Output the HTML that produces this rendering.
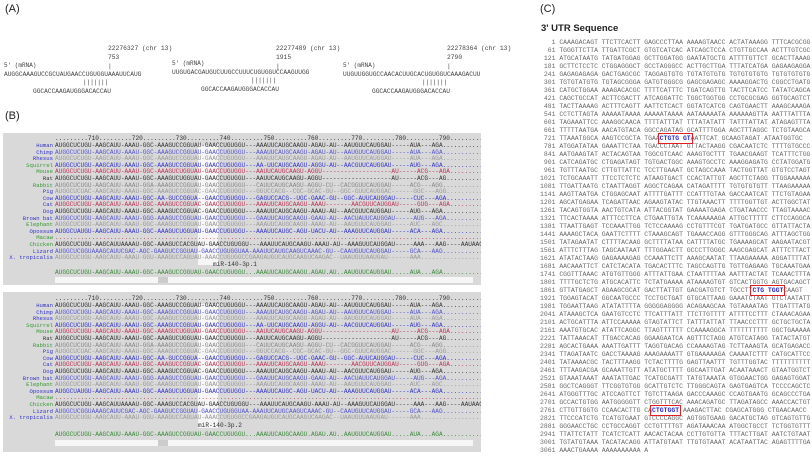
<!DOCTYPE html>
<html><head><meta charset="utf-8"><style>
body{margin:0;width:812px;height:457px;background:#fff;position:relative;overflow:hidden;font-family:"Liberation Sans",sans-serif}
.a{position:absolute;white-space:pre;font-family:"Liberation Mono",monospace;color:#444}
.lbl{position:absolute;font-size:11px;color:#222}
.box{position:absolute;left:3px;width:478px;background:#d9d9d9;overflow:hidden}
.sp{position:absolute;left:0;width:50px;text-align:right;font-family:"Liberation Mono",monospace;font-size:5.6px;line-height:6.6px;white-space:pre}
.sq{position:absolute;left:52px;font-family:"Liberation Mono",monospace;font-size:6.1px;line-height:6.6px;white-space:pre;letter-spacing:0}
.hl{position:absolute;left:195px;width:20px;background:rgba(255,255,255,.75)}
.sb{position:absolute;left:52px;width:418px;height:6px;background:#f6f6f6}
.c{position:absolute;left:540px;top:39px;font-family:"Liberation Mono",monospace;font-size:6.45px;line-height:8px;white-space:pre;color:#6a6a6a}
.bl{color:#2a2ad0;font-weight:bold;outline:1.3px solid #e02020;outline-offset:1px}
.s{font-size:6.2px}
</style></head><body>
<div class="lbl" style="left:5px;top:3px">(A)</div>
<div class="lbl" style="left:5px;top:110px">(B)</div>
<div class="lbl" style="left:540px;top:3px">(C)</div>

<!-- Panel A -->
<div class="a" style="left:108px;top:44px;font-size:6.3px;line-height:9px">22276327 (chr 13)
753
|</div>
<div class="a" style="left:4px;top:62px;font-size:6px">5' (mRNA)</div>
<div class="a s" style="left:4px;top:71px">AUGGCAAAGUCCGCUAUGAACCUGUGGUAAAUUCAUG</div>
<div class="a" style="left:83px;top:79px;font-size:6px">|||||||</div>
<div class="a s" style="left:33px;top:88px">GGCACCAAGAUGGGACACCAU</div>

<div class="a" style="left:276px;top:44px;font-size:6.3px;line-height:9px">22277489 (chr 13)
1915
|</div>
<div class="a" style="left:172px;top:60px;font-size:6px">5' (mRNA)</div>
<div class="a s" style="left:172px;top:69px">UUGUGACGAUGUCUUGCCUUUCUGUGGUCCAAGUUGG</div>
<div class="a" style="left:251px;top:77px;font-size:6px">|||||||</div>
<div class="a s" style="left:201px;top:86px">GGCACCAAGAUGGGACACCAU</div>

<div class="a" style="left:447px;top:44px;font-size:6.3px;line-height:9px">22278364 (chr 13)
2790
|</div>
<div class="a" style="left:343px;top:62px;font-size:6px">5' (mRNA)</div>
<div class="a s" style="left:343px;top:71px">UUGUUGGUGCCAACACUUGCACUGUGGUCAAAGACUU</div>
<div class="a" style="left:422px;top:79px;font-size:6px">|||||||</div>
<div class="a s" style="left:372px;top:88px">GGCACCAAGAUGGGACACCAU</div>

<!-- Panel B box 1 -->
<div class="box" style="top:133px;height:152px">
 <div class="hl" style="top:12px;height:120px"></div>
 <div class="sq" style="top:3px;color:#333">.........710.........720.........730.........740.........750.........760.........770.........780.........790.........</div>
 <div class="sp" style="top:10px"><span style="color:#33c">Human</span>
<span style="color:#33c">Chimp</span>
<span style="color:#33c">Rhesus</span>
<span style="color:#393">Squirrel</span>
<span style="color:#393">Mouse</span>
<span style="color:#333">Rat</span>
<span style="color:#393">Rabbit</span>
<span style="color:#33c">Pig</span>
<span style="color:#33c">Cow</span>
<span style="color:#33c">Cat</span>
<span style="color:#33c">Dog</span>
<span style="color:#33c">Brown bat</span>
<span style="color:#393">Elephant</span>
<span style="color:#33c">Opossum</span>
<span style="color:#393">Macaw</span>
<span style="color:#393">Chicken</span>
<span style="color:#33c">Lizard</span>
<span style="color:#33c">X. tropicalis</span></div>
 <div class="sq" style="top:10px"><span style="color:#333">AUGGCUCUGU-AAGCAUU-AAAU-GGC-AAAGUCCGGUAU-GAACCUGUGGU---AAAUUCAUGCAAGU-AGAU-AU--AAUGUUCAUGGAU-----AUA---AGA..............</span>
<span style="color:#55c">AUGGCUCUGU-AAGCAUU-AAAU-GGC-AAAGUCCGGUAU-GAACCUGUGGU---AAAUUCAUGCAAGU-AGAU-AU--AAUGUUCAUGGAU-----AUA---AGA..............</span>
<span style="color:#999">AUGGCUCUGU-AAGCAUU-AAAU-GGC-AAAGUCCGGUAU-GAACCUGUGGU---AAAUUCAUGCAAGU-AGAU-AU--AAUGUUCAUGGAU-----AUA---AGA..............</span>
<span style="color:#33c">AUGGCUCUGU-AAGCAUU-AAAU-GGC-AAAGUCCGGUAU-GAACCUGUGGU---AA-UUCAUGCAAGU-AGGU-AU--AACGUUCAUGGAU-----AUG---AGA..............</span>
<span style="color:#b35">AUGGCUCUGU-AAGCAUU-AAAU-GGC-AAAGUCUGGUAU-GAACCUGUGGU---AAUUCAUGCAAGU-AGGU-------------------AU-----ACG---AGA..............</span>
<span style="color:#333">AUGGCUCUGU-AAGCAUU-AAAU-GGC-AAAGUCUGGUAU-GAACCUGUGGU---AAUUCAUGCAAGU-AGGU-------------------AU-----ACG---AG...............</span>
<span style="color:#888">AUGGCUCUGU-AAGCAUU-AAAU-GGA-AAAGUCCGGUAU-GAACCUGUGGU---CAUUCAUGCAAGU-AGGU-CU--CACGGUUCAUGGAU-----ACG---AGG..............</span>
<span style="color:#999">AUGGCUCUAC-AAGCAUU-AAAU-GGC-AAAGUCCGGUAC-GAACCUGUGGU---GGUCCACG--CGC-GCAC-GU--GGC-GUUCAUGGAC------GGC---AGG..............</span>
<span style="color:#33c">AUGGCUCUGU-AAGCAUU-AAAU-GGC-AA-GUCCGGUA--GAACCUGUGGU---GAGUCCACG--UGC-GAAC-GU--GGC-AUUCAUGGAU-----CUC---AGA..............</span>
<span style="color:#b35">AUGGCUCUGU-AAGCAUU-AAAU-GGC-AAAGUCCGGUAC-GAACCUGUGGU---AAAUUCAUGCAAGU-AAAU-------AACGUUCAUGGAU-----GUG---AGA..............</span>
<span style="color:#333">AUGGCUCUGU-AAGCAUU-AAAU-GGC-AAAGUCCGGUAC-GAACCUGUGGU---AAAUUCAUGCAAGU-AAAU-AU--AACGUUCAUGGAU-----AUG---AGA..............</span>
<span style="color:#55c">AUGGCUCUGU-AAGCAUU-AAAU-GGG-AAAGUCCGGUAU-GAACCUGUGGU---GAAUUCAUGCAAGU-GAAU-AU--AACUAUUCAUGGAU-----AUG---AGA..............</span>
<span style="color:#999">AUGGCUCUGU-AAGCAUU-AAAU-GGC-AAAGUCCGGUAU-GAACCUGUGGU---AAAUUCAUGCAAGU-AAAU-AU--AAUGUUCAUGGAU-----AUC---AGC..............</span>
<span style="color:#33c">AUGGCUAUGU-AAGCAUU-AAAU-GGC-AAAGUCUGGUAU-GAACCUGUGGU---AAAUUCAUGC-AGU-UACU-AU--AAAGUUCAUGGAU-----ACA---AGA..............</span>
<span style="color:#b35">.....................................................................................................................</span>
<span style="color:#333">AUGGCUCUGU-AAGCAUUAAAAU-GGC-AAAGUCCACGUAU-GAACCUGUGGU---AAAUUCAUGCAAGU-AAAU-AU--AAAGUUCAUGGAU-----AAA---AAG----AAUAACAAU</span>
<span style="color:#55c">AUGGCUCGGUAAAGCAUUCGAC-AGC-GAAGUCCGGUAU-GAACCUGUGGUAA-AAAUUCAUGCAAGUCAAAC-GU--CAAUGUUCAUGGAU-----GCA---AAG..............</span>
<span style="color:#999">AUGGCUCUGU-AAGCAUU-AAAU-GGU-AAAGUCCAGUAU-AAACCUGUGGCCGAAGAUGUCAUGCAAGUCAAGAC--UAAUGUUAAUGAU------AAA..................</span></div>
 <div class="sq" style="top:129px;color:#333;left:210px">miR-140-3p.1</div>
 <div class="sq" style="top:137px;color:#3a8a3a">AUGGCUCUGU-AAGCAUU-AAAU-GGC-AAAGUCCGGUAU-GAACCUGUGGU...AAAUUCAUGCAAGU.AGAU.AU..AAUGUUCAUGGAU.....AUA...AGA..............</div>
 <div class="sb" style="top:144px"></div>
 <div style="position:absolute;left:155px;top:144px;width:10px;height:6px;background:#ccc"></div>
</div>

<!-- Panel B box 2 -->
<div class="box" style="top:292px;height:160px">
 <div class="hl" style="top:12px;height:124px"></div>
 <div class="sq" style="top:4px;color:#333">.........710.........720.........730.........740.........750.........760.........770.........780.........790.........</div>
 <div class="sp" style="top:11px"><span style="color:#33c">Human</span>
<span style="color:#33c">Chimp</span>
<span style="color:#33c">Rhesus</span>
<span style="color:#393">Squirrel</span>
<span style="color:#393">Mouse</span>
<span style="color:#333">Rat</span>
<span style="color:#393">Rabbit</span>
<span style="color:#33c">Pig</span>
<span style="color:#33c">Cow</span>
<span style="color:#33c">Cat</span>
<span style="color:#33c">Dog</span>
<span style="color:#33c">Brown bat</span>
<span style="color:#393">Elephant</span>
<span style="color:#33c">Opossum</span>
<span style="color:#393">Macaw</span>
<span style="color:#393">Chicken</span>
<span style="color:#33c">Lizard</span>
<span style="color:#33c">X. tropicalis</span></div>
 <div class="sq" style="top:11px"><span style="color:#333">AUGGCUCUGU-AAGCAUU-AAAU-GGC-AAAGUCCGGUAU-GAACCUGUGGU---AAAUUCAUGCAAGU-AGAU-AU--AAUGUUCAUGGAU-----AUA---AGA..............</span>
<span style="color:#55c">AUGGCUCUGU-AAGCAUU-AAAU-GGC-AAAGUCCGGUAU-GAACCUGUGGU---AAAUUCAUGCAAGU-AGAU-AU--AAUGUUCAUGGAU-----AUA---AGA..............</span>
<span style="color:#999">AUGGCUCUGU-AAGCAUU-AAAU-GGC-AAAGUCCGGUAU-GAACCUGUGGU---AAAUUCAUGCAAGU-AGAU-AU--AAUGUUCAUGGAU-----AUA---AGA..............</span>
<span style="color:#33c">AUGGCUCUGU-AAGCAUU-AAAU-GGC-AAAGUCCGGUAU-GAACCUGUGGU---AA-UUCAUGCAAGU-AGGU-AU--AACGUUCAUGGAU-----AUG---AGA..............</span>
<span style="color:#b35">AUGGCUCUGU-AAGCAUU-AAAU-GGC-AAAGUCUGGUAU-GAACCUGUGGU---AAUUCAUGCAAGU-AGGU-------------------AU-----ACG---AGA..............</span>
<span style="color:#333">AUGGCUCUGU-AAGCAUU-AAAU-GGC-AAAGUCUGGUAU-GAACCUGUGGU---AAUUCAUGCAAGU-AGGU-------------------AU-----ACG---AG...............</span>
<span style="color:#888">AUGGCUCUGU-AAGCAUU-AAAU-GGA-AAAGUCCGGUAU-GAACCUGUGGU---CAUUCAUGCAAGU-AGGU-CU--CACGGUUCAUGGAU-----ACG---AGG..............</span>
<span style="color:#999">AUGGCUCUAC-AAGCAUU-AAAU-GGC-AAAGUCCGGUAC-GAACCUGUGGU---GGUCCACG--CGC-GCAC-GU--GGC-GUUCAUGGAC------GGC---AGG..............</span>
<span style="color:#33c">AUGGCUCUGU-AAGCAUU-AAAU-GGC-AA-GUCCGGUA--GAACCUGUGGU---GAGUCCACG--UGC-GAAC-GU--GGC-AUUCAUGGAU-----CUC---AGA..............</span>
<span style="color:#b35">AUGGCUCUGU-AAGCAUU-AAAU-GGC-AAAGUCCGGUAC-GAACCUGUGGU---AAAUUCAUGCAAGU-AAAU-------AACGUUCAUGGAU-----GUG---AGA..............</span>
<span style="color:#333">AUGGCUCUGU-AAGCAUU-AAAU-GGC-AAAGUCCGGUAC-GAACCUGUGGU---AAAUUCAUGCAAGU-AAAU-AU--AACGUUCAUGGAU-----AUG---AGA..............</span>
<span style="color:#55c">AUGGCUCUGU-AAGCAUU-AAAU-GGG-AAAGUCCGGUAU-GAACCUGUGGU---GAAUUCAUGCAAGU-GAAU-AU--AACUAUUCAUGGAU-----AUG---AGA..............</span>
<span style="color:#999">AUGGCUCUGU-AAGCAUU-AAAU-GGC-AAAGUCCGGUAU-GAACCUGUGGU---AAAUUCAUGCAAGU-AAAU-AU--AAUGUUCAUGGAU-----AUC---AGC..............</span>
<span style="color:#33c">AUGGCUAUGU-AAGCAUU-AAAU-GGC-AAAGUCUGGUAU-GAACCUGUGGU---AAAUUCAUGC-AGU-UACU-AU--AAAGUUCAUGGAU-----ACA---AGA..............</span>
<span style="color:#b35">.....................................................................................................................</span>
<span style="color:#333">AUGGCUCUGU-AAGCAUUAAAAU-GGC-AAAGUCCACGUAU-GAACCUGUGGU---AAAUUCAUGCAAGU-AAAU-AU--AAAGUUCAUGGAU-----AAA---AAG----AAUAACAAU</span>
<span style="color:#55c">AUGGCUCGGUAAAGCAUUCGAC-AGC-GAAGUCCGGUAU-GAACCUGUGGUAA-AAAUUCAUGCAAGUCAAAC-GU--CAAUGUUCAUGGAU-----GCA---AAG..............</span>
<span style="color:#999">AUGGCUCUGU-AAGCAUU-AAAU-GGU-AAAGUCCAGUAU-AAACCUGUGGCCGAAGAUGUCAUGCAAGUCAAGAC--UAAUGUUAAUGAU------AAA..................</span></div>
 <div class="sq" style="top:131px;color:#333;left:195px">miR-140-3p.2</div>
 <div class="sq" style="top:140px;color:#3a8a3a">AUGGCUCUGU-AAGCAUU-AAAU-GGC-AAAGUCCGGUAU-GAACCUGUGGU...AAAUUCAUGCAAGU.AGAU.AU..AAUGUUCAUGGAU.....AUA...AGA..............</div>
 <div class="sb" style="top:148px"></div>
 <div style="position:absolute;left:155px;top:148px;width:10px;height:6px;background:#ccc"></div>
</div>

<!-- Panel C -->
<div style="position:absolute;left:541px;top:23px;font-size:9.5px;font-weight:bold;color:#222">3' UTR Sequence</div>
<div class="c">   1 CAAAGACAGT TTCTTCACTT GAGCCCTTAA AAAAGTAACC ACTATAAAGG TTTCACGCGG
  61 TGGGTTCTTA TTGATTCGCT GTGTCATCAC ATCAGCTCCA CTGTTGCCAA ACTTTGTCGC
 121 ATGCATAATG TATGATGGAG GCTTGGATGG GAATATGCTG ATTTTGTTCT GCACTTAAAG
 181 GCTTCTCCTC CTGGAGGGCT GCCTAGGGCC ACTTGCTTGA TTTATCATGA GAGAAGAGGA
 241 GAGAGAGAGA GACTGAGCGC TAGGAGTGTG TGTATGTGTG TGTGTGTGTG TGTGTGTGTG
 301 TGTGTATGTG TGTAGCGGGA GATGTGGGCG GAGCGAGAGC AAAAGGACTG CGGCCTGATG
 361 CATGCTGGAA AAAGACACGC TTTTCATTTC TGATCAGTTG TACTTCATCC TATATCAGCA
 421 CAGCTGCCAT ACTTCGACTT ATCAGGATTC TGGCTGGTGG CCTGCGCGAG GGTGCAGTCT
 481 TACTTAAAAG ACTTTCAGTT AATTCTCACT GGTATCATCG CAGTGAACTT AAAGCAAAGA
 541 CCTCTTAGTA AAAAATAAAA AAAAATAAAA AATAAAAATA AAAAAAGTTA AATTTATTTA
 601 TAGAAATTCC AAAGGCAACA TTTTATTTAT TTTATATATT TATTTATTAT ATAGAGTTTA
 661 TTTTTAATGA AACATGTACA GGCCAGATAG GCATTTTGGA AGCTTTAGGC TCTGTAAGCA
 721 TTAAATGGCA AAGTCCGCTA TGAA<span class="bl">CTGTG GT</span>AATTCAT GCAAGTAGAT ATAATGGTGC
 781 ATGGATATAA GAAATTCTAA TGACCCTAAT GTTACTAAGG CGACAATCTC TTTTGTGCCC
 841 AATGAAGTAT ACTACAGTAA TGGCGTCAAC AAAGTGCTTT TGAACGAAGT TCATTTCTGG
 901 CATCAGATGC CTGAGATAGT TGTGACTGGC AAAGTGCCTC AAAGGAGATG CCTATGGATG
 961 TGTTTAATGC CTTGTTATTC TCCTTGAAAT GCTAGCCAAA TACTGGTTAT GTGTCCTAGT
1021 TCTGCAAATT TTCCTCTCTC ATAAGTGACT CCACTATTGT AGCTTCTAGG TTGGAAAAAA
1081 TTGATTAATG CTAATTAGGT AGGCTCAGAA CATAGATTTT TGTGTGTGTT TTAAGAAAAA
1141 AAGTTAATGA CTGGAGCAAT ATTTTGATTT CCATTTGTAA GACCAATCAT TTCTGTAGAA
1201 AGCATGAGAA TCAGATTAAC AGAAGTATAC TTGTAAACTT TTTTGGTTGT ACTTGGCTAT
1261 TACAGTGGTA AACTGTCATA ATTACGGTAT GAAAATGAGA CTGATAACCC TTAGTAAAAC
1321 TTCACTAAAA ATTTCCTTCA CTGAATTGTA TCAAAAAAGA ATTGCTTTTT CTTCCAGGCA
1381 TTAATTGAGT TCCAAATTGG TCTCCAAAAG CCTGTTTCGT TGATGATGCC GTTATTACTA
1441 AAAAGCTACA GAATTCTTTT CTAAAGCAGT TGAAACCAGG GTTTGGGCAG ATTTAGCTGG
1501 TATAGAATAT CTTTTACAAG GCTTTTATAA CATTTTATGC TGAAAAGCAT AAGAATACGT
1561 ATTTCTTTAG TAGCAATAAT TTTGGAACTT GCCCTTGGGC AAGCGAGCAT ATTTCTTACT
1621 ATATACTAAG GAGAAAAGAG CCAAATTCTT AAAGCAATAT TTAAGAAAAA AGGATTTTAT
1681 AACAAATTCT CATCTACATA TGACACTTTC TAGCCAGTTG TGTTGAGAAG TGCAAATGAA
1741 CGGTTTAAAC ATGTGTTGGG ATTTATTGAA CTAATTTTAA AATTTACTAT TCAAACTTTA
1801 TTTTGCTCTG ATGCACATTC TCTATGAAAA ATAAAAGTGT GTCACTGGTG AGTGACAGCT
1861 GTTATGAGCT AGAAGCGCAT GACTTATTGT GACGATGTCT TGCCTT<span class="bl">CTG TGGT</span>CAAGT
1921 TGGAGTACAT GGCAATGCCC TCCTGCTGAT GTGCATTAAG GAAATCTAAT GTCTAATATT
1981 TGGAATTAAG ATATATTTTA GGGGGAGGGG ACAGAAGCAA TGTAAAATAG TTGATTTATG
2041 ATAAAGCTCA GAATGTCCTC TTCATTTATT TTCTTGTTTT ATTTTCCTTT CTAAACAGAA
2101 ACTGCATTTA ATTCCAAAAA GTAGTATTCT TATTTATTAT TTAACCCTTT GCTGCTGCTA
2161 AAATGTGCAC ATATTCAGGC TTAGTTTTTT CCAAAAGGCA TTTTTTTTTT GGCTGAAAAA
2221 TATTAAACAT TTGACCACAG GGAAGAATCA AGTTTCTAGG ATGTCATAGG TATACTATGT
2281 AGCACTGAAA AAATTGATTT TAGGTGACAG CCAAAAGTAG TCTTAAAGTA GCATGAGACC
2341 TTAGATAATC GACCTAAAAG AAAGAAAATT GTGAAAAAGA CAAAATCTTT CATGCATTCC
2401 TATAAAACGC TACTTTAAGG TCTACTTTTG GAGTTAATTT TGTTTGGTAC TTTTTTTTTT
2461 TTTAAGACGA GCAAATTGTT ATATGCTTTT GGCAATTGAT ACAATAAACT GTAATGGTCT
2521 GTAAATAAAT AAATATTGAC TCATGCGATT TATGTAAATA GTGGAACTGG GAGAGTGGAT
2581 GGCTCAGGGT TTCGGTGTGG GCATTGTCTC TTGGGCAGTA GAGTGAGTCA TCCCCAGCTC
2641 ATGGGTTTGC ATCCAGTTCT TGTCTTAAGA GACCCAAAGC CCAGTGAATG GCAGCCCTGA
2701 GCCACTGTGG AATGGGGGTT CTGGTTTCAC AAACAGATGC TTAGATAGCC AAACCACTGT
2761 CTTGTTGGTG CCAACACTTG CA<span class="bl">CTGTGGT</span> AAAGACTTAC CGAGCATGGG CTGAACAACC
2821 TTCCCATCTG TCATGTGAAT GTCCCCAGGC AGTGGTGAAG GACATGCTAG GTCAGTGTTG
2881 GGGAACCTGC CCTGCCAGGT CCTGTTTTGT AGATAAACAA ATGGCTGCCT TCTGGTGTTT
2941 TTATTCTATT TCATCTCATT AACACTACAA CCTTGTGTTA TTTACTTGAT AATCTGTAAT
3001 TGTATGTAAA TACATACAGG ATTATGTAAT TTGTGTAAAT ACATAATTAC AGAGTTTTGA
3061 AAACTGAAAA AAAAAAAAAA A</div>
</body></html>
